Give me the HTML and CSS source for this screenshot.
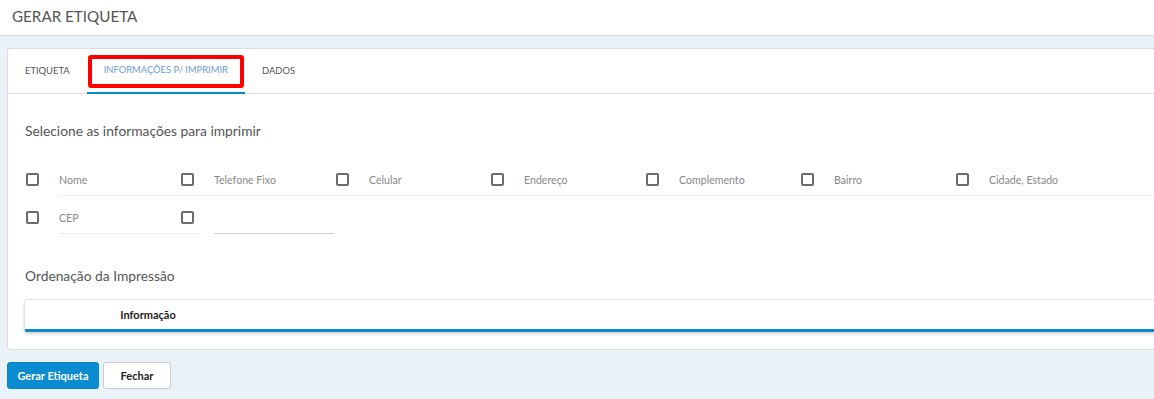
FILE: index.html
```html
<!DOCTYPE html>
<html lang="pt">
<head>
<meta charset="utf-8">
<title>Gerar Etiqueta</title>
<link rel="stylesheet" href="styles.css">
</head>
<body>
<header class="page-header">
  <h1 class="page-title">GERAR ETIQUETA</h1>
</header>
<main class="page-main">
  <section class="card">
    <nav class="tabs">
      <a class="tab">ETIQUETA</a>
      <a class="tab tab-active">INFORMAÇÕES P/ IMPRIMIR<span class="highlight"></span></a>
      <a class="tab">DADOS</a>
    </nav>
    <div class="card-body">
      <h2 class="section-title">Selecione as informações para imprimir</h2>
      <div class="opt-row opt-row-lined">
        <label class="opt"><span class="box"></span><span class="lbl">Nome</span></label>
        <label class="opt"><span class="box"></span><span class="lbl">Telefone Fixo</span></label>
        <label class="opt"><span class="box"></span><span class="lbl">Celular</span></label>
        <label class="opt"><span class="box"></span><span class="lbl">Endereço</span></label>
        <label class="opt"><span class="box"></span><span class="lbl">Complemento</span></label>
        <label class="opt"><span class="box"></span><span class="lbl">Bairro</span></label>
        <label class="opt"><span class="box"></span><span class="lbl">Cidade, Estado</span></label>
      </div>
      <div class="opt-row">
        <label class="opt"><span class="box"></span><span class="lbl lbl-wide">CEP</span></label>
        <label class="opt"><span class="box"></span><span class="lbl lbl-input"></span></label>
      </div>
      <h2 class="section-title section-title-2">Ordenação da Impressão</h2>
      <div class="table-box">
        <table class="order-table">
          <thead>
            <tr><th class="col-info">Informação</th><th></th></tr>
          </thead>
        </table>
      </div>
    </div>
  </section>
  <div class="actions">
    <button class="btn btn-primary">Gerar Etiqueta</button>
    <button class="btn btn-default">Fechar</button>
  </div>
</main>
</body>
</html>
```
FILE: styles.css
```css
* { box-sizing: border-box; }
html, body { margin: 0; padding: 0; }
body {
  background: #eaf2f9;
  font-family: "Lato", "Open Sans", sans-serif;
  color: #555;
  overflow: hidden;
}
.page-header {
  height: 36px;
  background: #fff;
  border-bottom: 1px solid #d9d9d9;
  padding-left: 12px;
}
.page-title {
  margin: 0;
  font-size: 15.2px;
  font-weight: 400;
  line-height: 33px;
  color: #555;
}
.page-main {
  padding: 12px 0 0 7px;
}
.card {
  background: #fff;
  border: 1px solid #dcdcdc;
  border-right: none;
  border-radius: 3px 0 0 3px;
  height: 302px;
}
.tabs {
  display: flex;
  height: 45px;
  border-bottom: 1px solid #ddd;
}
.tab {
  position: relative;
  display: block;
  padding: 0 17px;
  font-size: 9.4px;
  line-height: 44px;
  color: #555;
  text-transform: uppercase;
}
.tab-active {
  color: #6b9bd4;
  border-bottom: 2px solid #0a88c8;
  line-height: 42px;
  margin-bottom: -1px;
}
.highlight {
  position: absolute;
  left: 1px;
  right: 1px;
  top: 6px;
  height: 33px;
  border: 4px solid #ff0000;
  border-radius: 3px;
}
.card-body {
  padding: 28px 0 0 17px;
}
.section-title {
  margin: 0;
  font-size: 13.8px;
  font-weight: 400;
  line-height: 18px;
  color: #555;
}
.opt-row {
  display: flex;
  margin-top: 6px;
  padding-left: 1px;
}
.opt-row-lined {
  margin-top: 24px;
  background: linear-gradient(#ececec, #ececec) no-repeat 34px 100% / calc(100% - 34px) 1px;
}
.opt {
  flex: none;
  width: 155px;
  display: flex;
  align-items: center;
  height: 32px;
}
.box {
  flex: none;
  width: 13px;
  height: 13px;
  border: 2px solid #6a6a70;
  border-radius: 2px;
  margin-top: -2px;
}
.lbl {
  flex: none;
  margin-left: 20px;
  font-size: 10.6px;
  line-height: 32px;
  color: #888;
}
.lbl-wide {
  width: 141px;
  height: 32px;
  border-bottom: 1px solid #ececec;
}
.lbl-input {
  width: 120px;
  height: 32px;
  border-bottom: 1px solid #d0d0d0;
}
.section-title-2 {
  margin-top: 33px;
}
.table-box {
  margin-top: 14px;
  margin-left: -1px;
  border: 1px solid #e2e2e2;
  border-right: none;
  border-bottom: 3px solid #0a88c8;
  border-radius: 4px 0 0 3px;
  box-shadow: 0 2px 3px rgba(0,0,0,0.18);
}
.order-table {
  width: 100%;
  border-collapse: collapse;
}
.order-table th {
  height: 29px;
  padding: 0;
  font-size: 11px;
  font-weight: 700;
  color: #222;
}
.col-info {
  width: 246px;
  text-align: center;
}
.actions {
  display: flex;
  gap: 4px;
  margin-top: 12px;
}
.btn {
  height: 27px;
  border-radius: 3px;
  font-family: inherit;
  font-size: 11px;
  font-weight: 700;
  padding: 0;
  cursor: pointer;
}
.btn-primary {
  width: 92px;
  background: #0b8bd0;
  border: 1px solid #0a84c6;
  color: #fff;
}
.btn-default {
  width: 68px;
  background: #fff;
  border: 1px solid #ccc;
  color: #222;
}
```
